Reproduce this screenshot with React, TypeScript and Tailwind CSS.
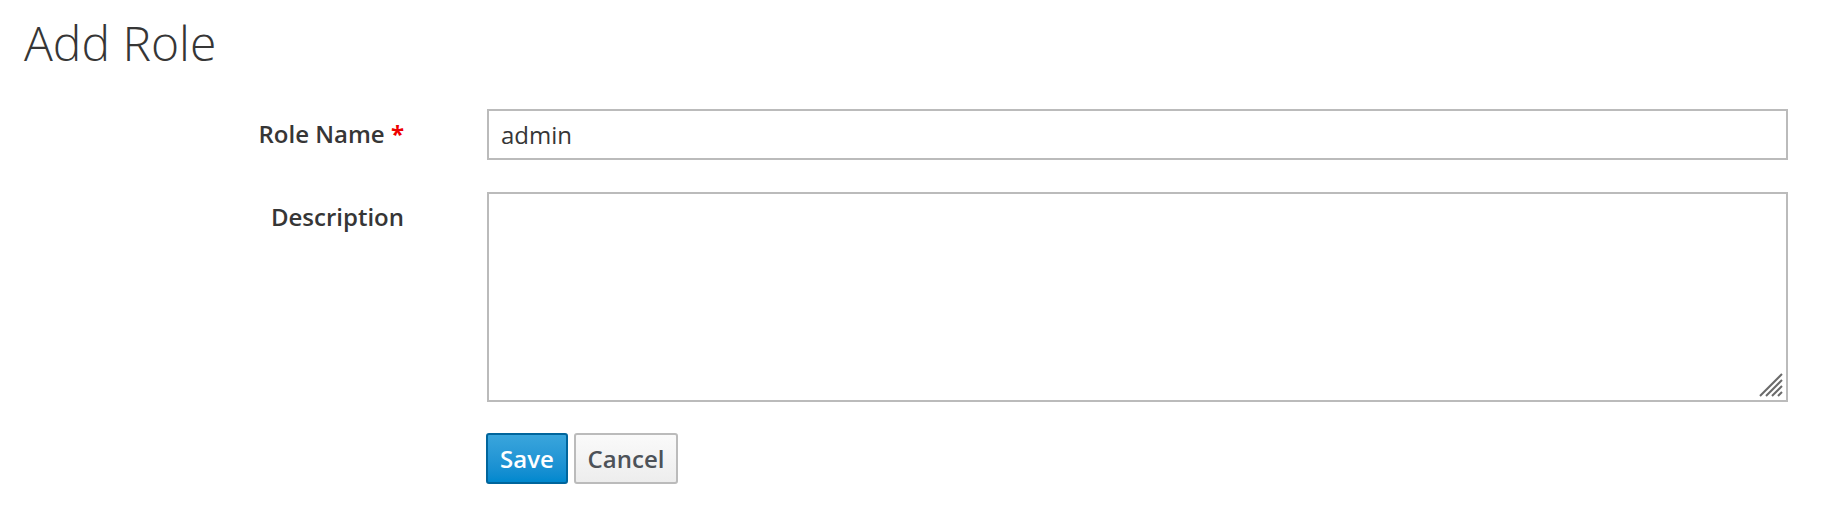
import React from "react";

export default function App() {
  return (
    <div
      className="w-[1836px] h-[522px] bg-white text-[#363636]"
      style={{ fontFamily: '"Open Sans", "Noto Sans", sans-serif' }}
    >
      <h1 className="ml-[24px] pt-[16px] text-[48px] leading-[54px] font-light text-[#363636]">
        Add Role
      </h1>
      <div className="mt-[39px] pr-[48px] flex flex-col">
        <div className="flex items-start">
          <label className="w-[404px] shrink-0 text-right pt-[7px] text-[24px] leading-[36px] font-semibold text-[#363636]">
            Role Name <span className="text-[#ee0000] font-bold">*</span>
          </label>
          <div className="ml-[83px] flex-1">
            <input
              readOnly
              value="admin"
              className="w-full h-[51px] border-2 border-[#bbbbbb] px-[12px] text-[24px] text-[#363636] outline-none bg-white"
              style={{ fontFamily: '"Open Sans", "Noto Sans", sans-serif' }}
            />
          </div>
        </div>
        <div className="flex items-start mt-[32px]">
          <label className="w-[404px] shrink-0 text-right pt-[7px] text-[24px] leading-[36px] font-semibold text-[#363636]">
            Description
          </label>
          <div className="ml-[83px] flex-1 relative h-[210px]">
            <textarea
              readOnly
              className="w-full h-[210px] block border-2 border-[#bbbbbb] px-[12px] text-[24px] outline-none resize-none bg-white"
            />
            <svg
              className="absolute right-[4px] bottom-[4px]"
              width="26"
              height="26"
              viewBox="0 0 26 26"
            >
              <g stroke="#6a6a6a" strokeWidth="2">
                <line x1="2" y1="24" x2="24" y2="2" />
                <line x1="8" y1="24" x2="24" y2="8" />
                <line x1="14" y1="24" x2="24" y2="14" />
                <line x1="20" y1="24" x2="24" y2="20" />
              </g>
            </svg>
          </div>
        </div>
        <div className="flex mt-[31px] ml-[486px] gap-[6px]">
          <button className="h-[51px] w-[82px] rounded-[3px] border-2 border-[#00659c] bg-gradient-to-b from-[#39a5dc] to-[#0088ce] text-white text-[24px] font-semibold">
            Save
          </button>
          <button className="h-[51px] w-[104px] rounded-[3px] border-2 border-[#bbbbbb] bg-gradient-to-b from-[#fafafa] to-[#ededed] text-[#4d5258] text-[24px] font-semibold">
            Cancel
          </button>
        </div>
      </div>
    </div>
  );
}
